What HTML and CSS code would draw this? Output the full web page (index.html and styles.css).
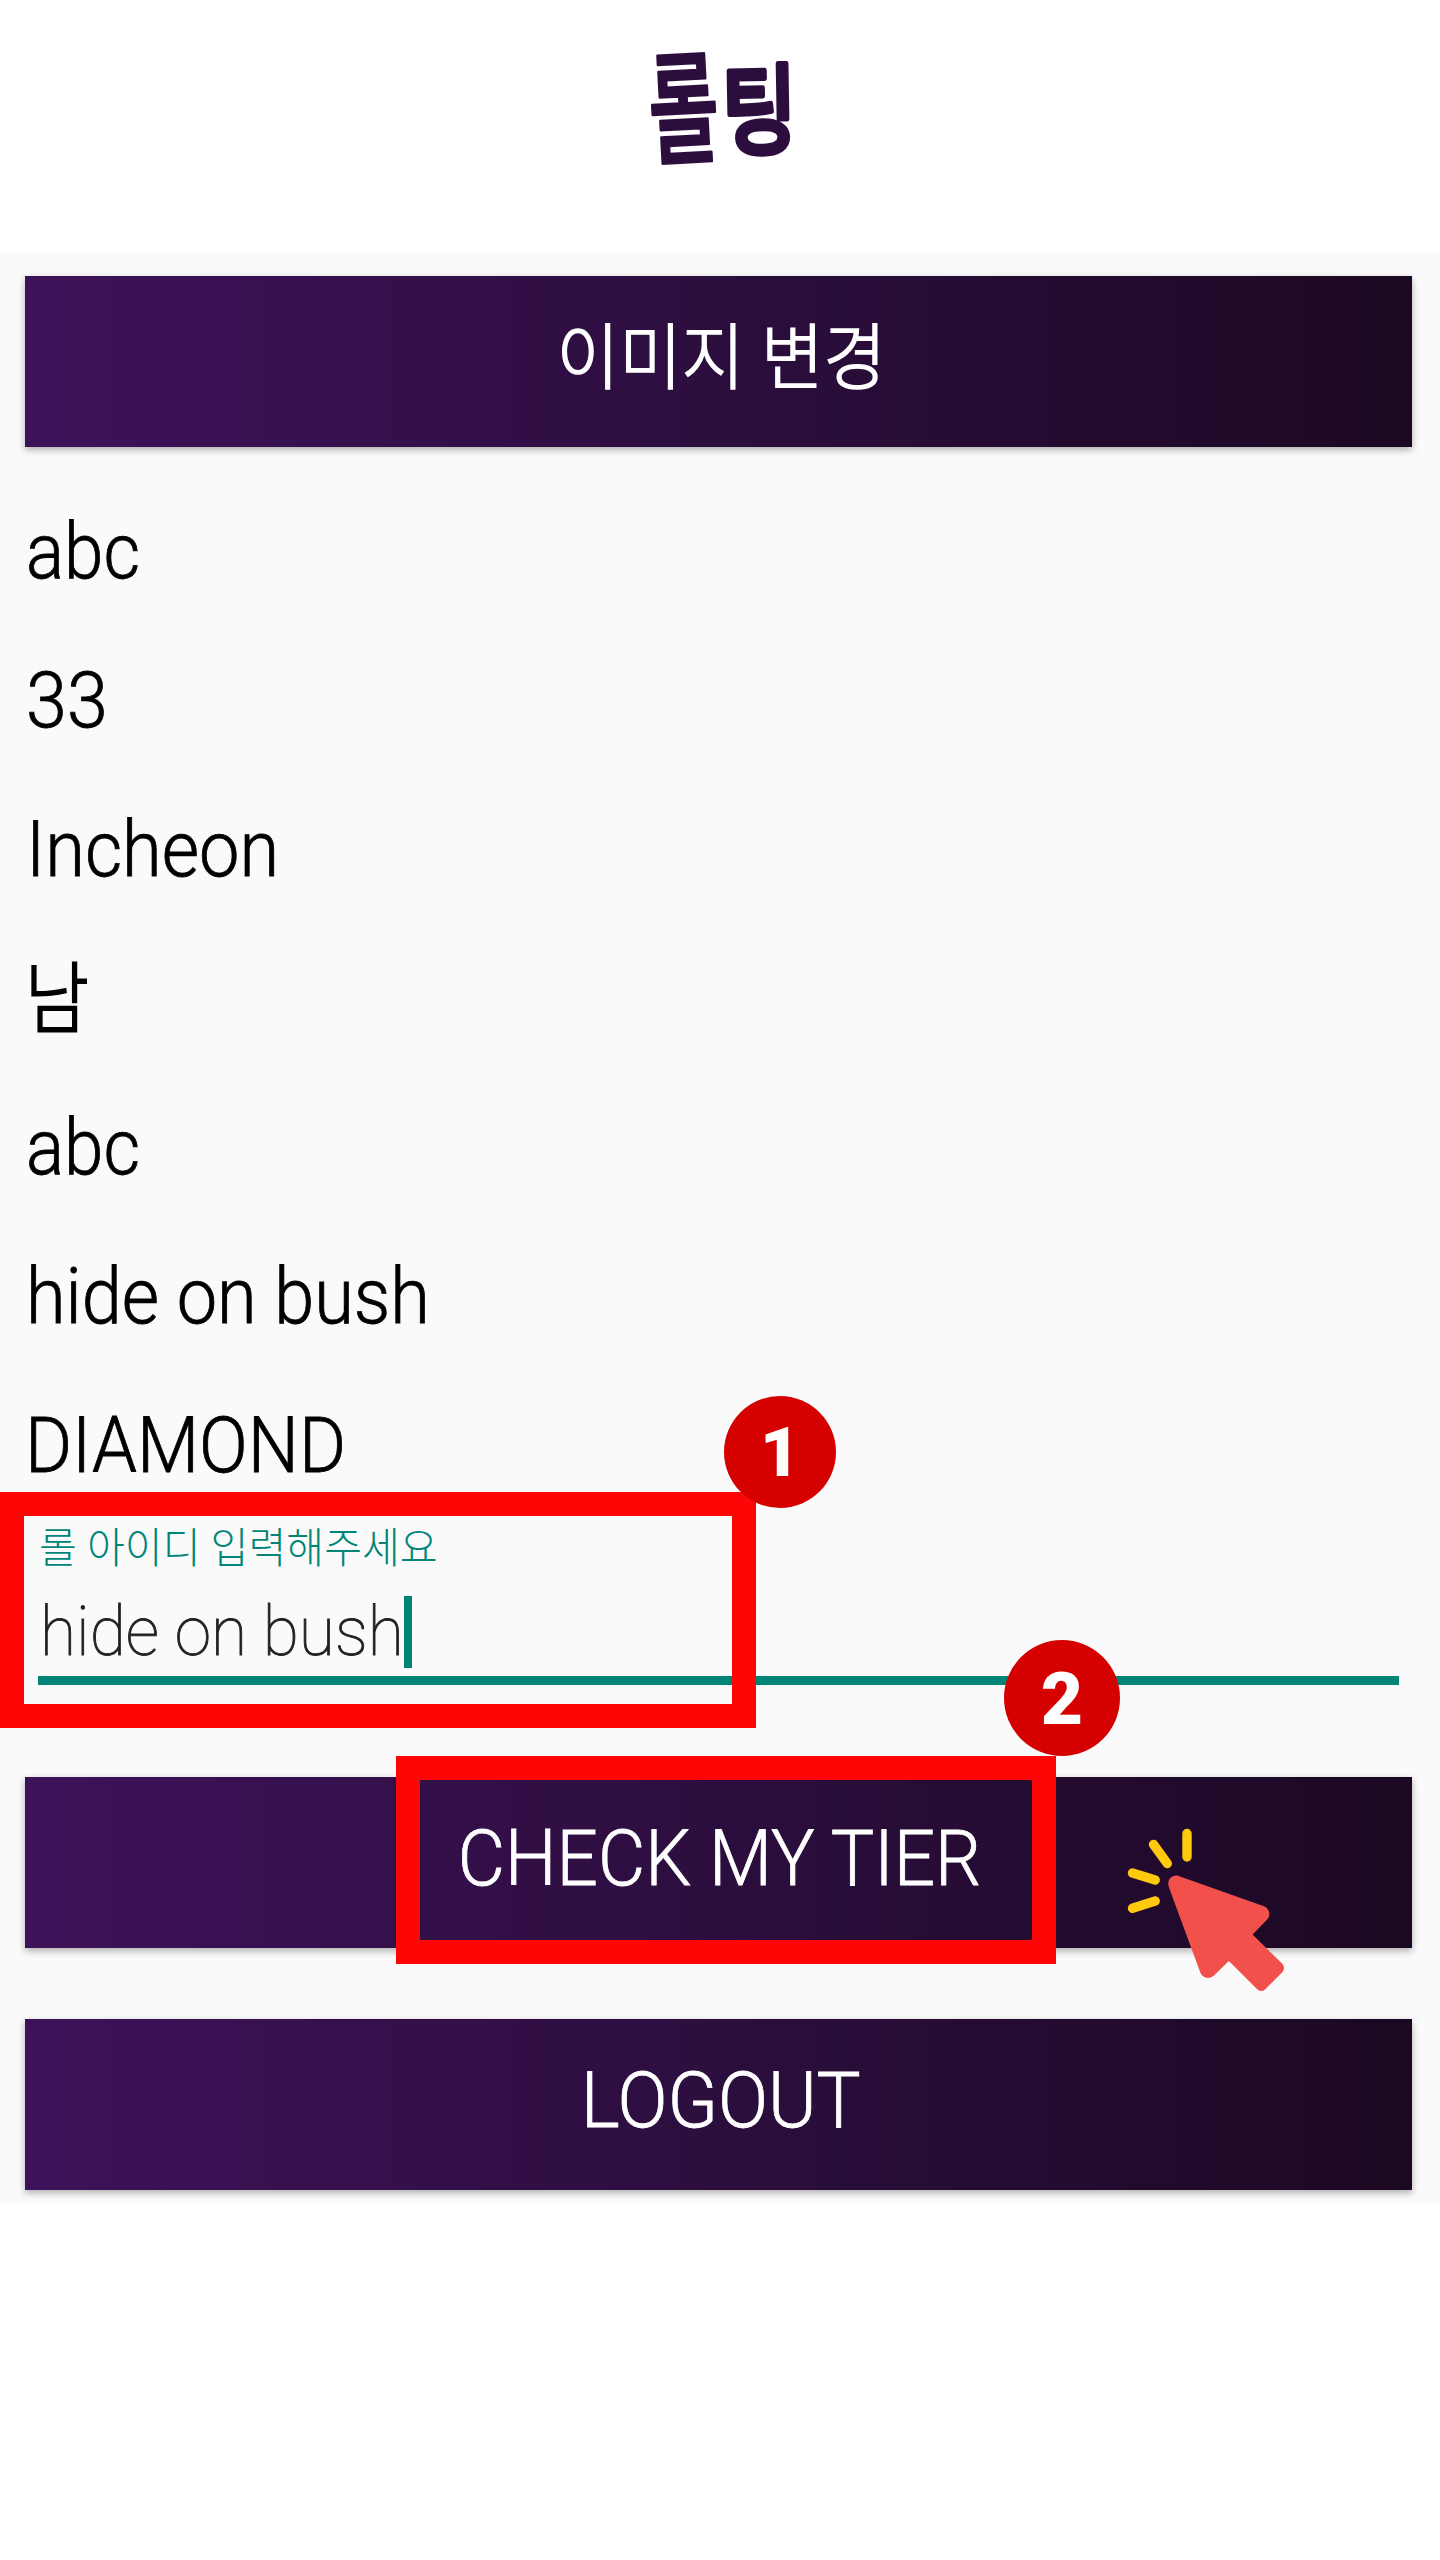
FILE: index.html
```
<!DOCTYPE html>
<html lang="ko">
<head>
<meta charset="utf-8">
<title>롤팅</title>
<link rel="stylesheet" href="styles.css">
</head>
<body>
<header class="header">
  <svg class="logo" viewBox="0 0 160 130" role="img" aria-label="롤팅">
    <text class="logo-glyph" transform="translate(11 111) rotate(-3) scale(.95 1.52)">롤</text>
    <text class="logo-glyph logo-glyph-wide" transform="translate(82 103) rotate(-1) scale(1.03 1.24)">팅</text>
  </svg>
</header>
<main class="profile">
  <button class="button"><span class="t-image">이미지 변경</span></button>
  <ul class="details">
    <li><span class="t-abc">abc</span></li>
    <li><span class="t-age">33</span></li>
    <li><span class="t-city">Incheon</span></li>
    <li><span class="t-sex">남</span></li>
    <li><span class="t-abc">abc</span></li>
    <li><span class="t-name">hide on bush</span></li>
    <li><span class="t-tier">DIAMOND</span></li>
  </ul>
  <div class="field">
    <div class="field-label"><span>롤 아이디 입력해주세요</span></div>
    <div class="field-value"><span>hide on bush</span><i class="caret"></i></div>
  </div>
  <button class="button check"><span class="t-check">CHECK MY TIER</span></button>
  <button class="button logout"><span class="t-logout">LOGOUT</span></button>

  <div class="frame frame-id"></div>
  <div class="frame frame-check"></div>
  <div class="badge badge-one"><span>1</span></div>
  <div class="badge badge-two"><span>2</span></div>
  <svg class="pointer" viewBox="0 0 240 210">
    <g stroke="#ffc90e" stroke-width="9.4" stroke-linecap="round">
      <path d="M107 33.500V57M73.500 44.500L87.300 63.500M52.500 73L75.200 80M52.500 108.300L75.200 101"/>
    </g>
    <path fill="#f2504b" d="M98.500 75.900L184 106.200C189.500 108.500 191 115 187.200 119.500L172.600 134.600L202.500 164Q205.500 168 202.500 172L185 189.500Q181.500 192.500 177.500 189.500L148.900 161L134 175.500C129.500 179.500 122.500 178.500 120.300 172.500L88.800 87C86.500 80 92 74 98.500 75.900Z"/>
  </svg>
</main>
</body>
</html>
```
FILE: styles.css
```
* { box-sizing: border-box; }
body {
  margin: 0;
  min-height: 2560px;
  background: #fff;
  color: #000;
  font-family: Roboto, "Noto Sans CJK KR", sans-serif;
  font-weight: 300;
}
.header {
  height: 252px;
  display: flex;
  justify-content: center;
  padding-top: 44px;
}
.logo { width: 160px; height: 130px; overflow: visible; }
.logo-glyph {
  font: 500 80px "Noto Sans CJK KR", sans-serif;
  fill: #2c0e3e;
  stroke: #2c0e3e;
  stroke-width: 2px;
  stroke-linejoin: round;
}
.logo-glyph-wide { stroke-width: 4px; }
.profile {
  position: relative;
  height: 1952px;
  padding: 24px 28px 0 25px;
  background: #fafafa;
  overflow: hidden;
}
.button {
  display: flex;
  align-items: center;
  justify-content: center;
  width: 100%;
  height: 171px;
  padding: 0 0 8px;
  border: 0;
  background: linear-gradient(90deg, #3e125a, #2c0e3e 50%, #1b0822);
  box-shadow: 0 3px 7px rgba(0, 0, 0, .3);
  color: #fff;
  font: inherit;
  font-size: 78px;
  line-height: 1;
}
.button span, .details span, .field span {
  display: inline-block;
  white-space: nowrap;
}
.button span, .details span { -webkit-text-stroke: .8px currentColor; }
.button .t-image { font-size: 72px; transform: translate(3px, 1px) scaleX(.945); -webkit-text-stroke-width: 1.6px; }
.button .t-check { transform: translateX(1px) scaleX(.933); }
.button .t-logout { transform: translateX(2px) scaleX(.947); }
.details {
  margin: 0;
  padding: 30px 0 0;
  list-style: none;
}
.details li {
  height: 149px;
  font-size: 78px;
  line-height: 149px;
}
.details span, .field span { transform-origin: 0 50%; }
.t-abc { transform: translateX(1px) scaleX(.91); }
.t-age { transform: translateX(1px) scaleX(.945); }
.t-city { transform: translateX(1px) scaleX(.925); }
.details .t-sex { transform: translate(0, 2px) scaleX(.89); -webkit-text-stroke-width: 1.8px; }
.t-name { transform: translateX(1px) scaleX(.924); }
.t-tier { transform: translateX(0) scaleX(.922); }
.field {
  width: 1361px;
  height: 165px;
  margin: 0 0 0 13px;
  border-bottom: 9px solid #008577;
}
.field-label {
  height: 58px;
  color: #008577;
  font-size: 42px;
  line-height: 58px;
}
.field-label span { transform: translateX(1px) scaleX(.98); }
.field-value {
  display: flex;
  align-items: center;
  height: 107px;
  color: #222;
  font-size: 69px;
  font-weight: 100;
}
.field-value span {
  transform: translateX(2px) scaleX(.955);
  -webkit-text-stroke: .9px currentColor;
}
.caret { width: 8px; height: 72px; margin-left: -15px; background: #008577; }
.check { margin-top: 92px; }
.logout { margin-top: 71px; }
.frame {
  position: absolute;
  border: 24px solid #fd0606;
}
.frame-id { left: 0; top: 1240px; width: 756px; height: 236px; }
.frame-check { left: 396px; top: 1504px; width: 660px; height: 208px; }
.badge {
  position: absolute;
  display: flex;
  align-items: center;
  justify-content: center;
  border-radius: 50%;
  background: #d50000;
  color: #fff;
  font-family: Roboto, sans-serif;
  font-weight: 900;
  line-height: 1;
}
.badge-one { left: 724px; top: 1144px; width: 112px; height: 112px; font-size: 69px; }
.badge-two { left: 1004px; top: 1388px; width: 116px; height: 116px; padding-top: 2px; font-size: 73px; }
.pointer { position: absolute; left: 1080px; top: 1548px; width: 240px; height: 210px; }
```
